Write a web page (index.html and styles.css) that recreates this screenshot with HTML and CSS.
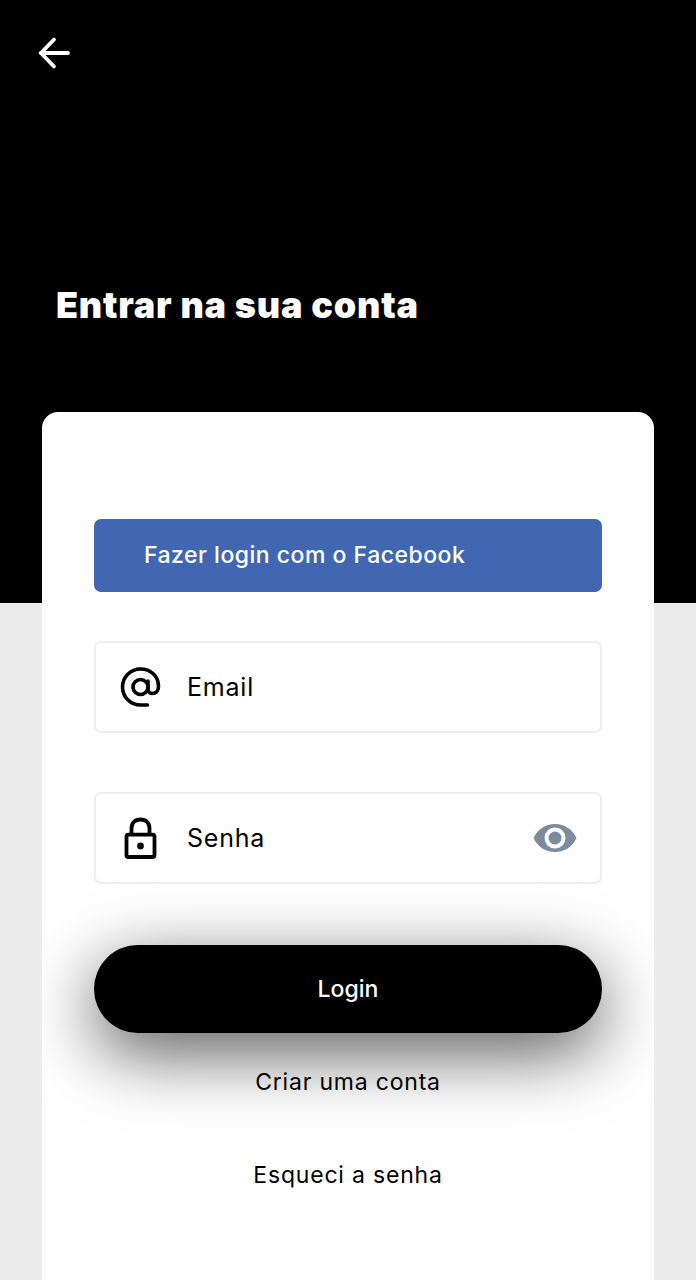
FILE: index.html
```html
<!DOCTYPE html>
<html lang="pt-BR">
<head>
    <meta charset="UTF-8">
    <meta name="viewport" content="width=device-width, initial-scale=1.0">
    <title>Entrar na sua conta</title>
    <link rel="stylesheet" href="styles.css">
</head>
<body>
<div class="screen">
    <div class="header">
        <a class="back-btn" href="#" aria-label="Voltar">
            <svg width="34" height="34" viewBox="0 0 34 34" fill="none" stroke="#fff" stroke-width="3.8" stroke-linecap="round" stroke-linejoin="miter">
                <path d="M31 17H4"/>
                <path d="M17 3.500L4 17L17 30.500"/>
            </svg>
        </a>
        <h1>Entrar na sua conta</h1>
    </div>

    <div class="card">
        <button class="fb-btn">Fazer login com o Facebook</button>

        <div class="field">
            <svg class="field-icon" width="42" height="42" viewBox="0 0 42 42" fill="none" stroke="#000" stroke-width="3.600" stroke-linecap="round">
                <circle cx="20.500" cy="21" r="7.500"/>
                <path d="M28 15V23.500C28 26 30 27.500 32.300 27.500C35.500 27.500 38.500 25.500 38.500 20.500C38.500 10 30.500 3 20.500 3C10.500 3 2.500 11 2.500 21C2.500 31 10.500 39 20.500 39H27.500"/>
            </svg>
            <span class="field-label">Email</span>
        </div>

        <div class="field">
            <svg class="field-icon" width="42" height="42" viewBox="0 0 42 42" fill="none" stroke="#000" stroke-width="3.800" stroke-linejoin="round">
                <rect x="6.500" y="17.700" width="28" height="22.300" rx="2"/>
                <path d="M11.500 17.500V11.500C11.500 5.500 15 2.500 20.500 2.500C26 2.500 29.500 5.500 29.500 11.500V17.500"/>
                <circle cx="20.500" cy="29" r="3.400" fill="#000" stroke="none"/>
            </svg>
            <span class="field-label">Senha</span>
            <svg class="eye-icon" width="44" height="30" viewBox="0 0 44 30">
                <path fill-rule="evenodd" fill="#7c8b9e" d="M0.500 15C5 6 12.500 1 22 1C31.500 1 39 6 43.500 15C39 24 31.500 29 22 29C12.500 29 5 24 0.500 15ZM22 4.500A10.500 10.500 0 1 0 22 25.500A10.500 10.500 0 1 0 22 4.500Z"/>
                <circle cx="22" cy="15" r="6.500" fill="#7c8b9e"/>
            </svg>
        </div>

        <button class="login-btn">Login</button>

        <a class="card-link link-first" href="#">Criar uma conta</a>
        <a class="card-link" href="#">Esqueci a senha</a>
    </div>
</div>
</body>
</html>
```

FILE: styles.css
```css
html, body {
    margin: 0;
    padding: 0;
}
body {
    font-family: 'Inter', 'Liberation Sans', sans-serif;
    background-color: #ececec;
    color: #000;
}
.screen {
    height: 1280px;
    overflow: hidden;
}
.header {
    height: 603px;
    background-color: #000;
    box-sizing: border-box;
    padding: 36px 0 0 37px;
}
.back-btn {
    display: block;
    width: 34px;
    height: 34px;
}
.header h1 {
    margin: 212px 0 0 19px;
    font-size: 36px;
    line-height: 46px;
    font-weight: 900;
    letter-spacing: 0.8px;
    color: #fff;
}
.card {
    margin: -191px 42px 0;
    height: 960px;
    box-sizing: border-box;
    padding: 107px 52px 0;
    background-color: #fff;
    border-radius: 16px 16px 0 0;
    display: flex;
    flex-direction: column;
    overflow: hidden;
}
.fb-btn {
    height: 73px;
    flex-shrink: 0;
    padding: 0 0 2px 50px;
    border: none;
    border-radius: 7px;
    background-color: #4267b2;
    color: #fff;
    font-family: inherit;
    font-size: 23px;
    font-weight: 500;
    letter-spacing: 0.5px;
    text-align: left;
}
.field {
    height: 92px;
    flex-shrink: 0;
    box-sizing: border-box;
    margin-top: 49px;
    padding: 0 23px 0 24px;
    border: 2px solid #eeeeee;
    border-radius: 7px;
    display: flex;
    align-items: center;
}
.field + .field {
    margin-top: 59px;
}
.field-icon {
    flex-shrink: 0;
}
.field-label {
    margin-left: 25px;
    font-size: 25px;
    letter-spacing: 0.8px;
    flex-grow: 1;
}
.eye-icon {
    flex-shrink: 0;
}
.login-btn {
    height: 88px;
    flex-shrink: 0;
    margin-top: 61px;
    border: none;
    border-radius: 44px;
    background-color: #000;
    color: #fff;
    font-family: inherit;
    font-size: 23px;
    font-weight: 500;
    box-shadow: 0 20px 70px rgba(0, 0, 0, 0.65);
}
.card-link {
    margin-top: 61px;
    height: 32px;
    line-height: 32px;
    text-align: center;
    font-size: 23px;
    letter-spacing: 0.8px;
    color: #000;
    text-decoration: none;
}
.link-first {
    margin-top: 33px;
}
```
